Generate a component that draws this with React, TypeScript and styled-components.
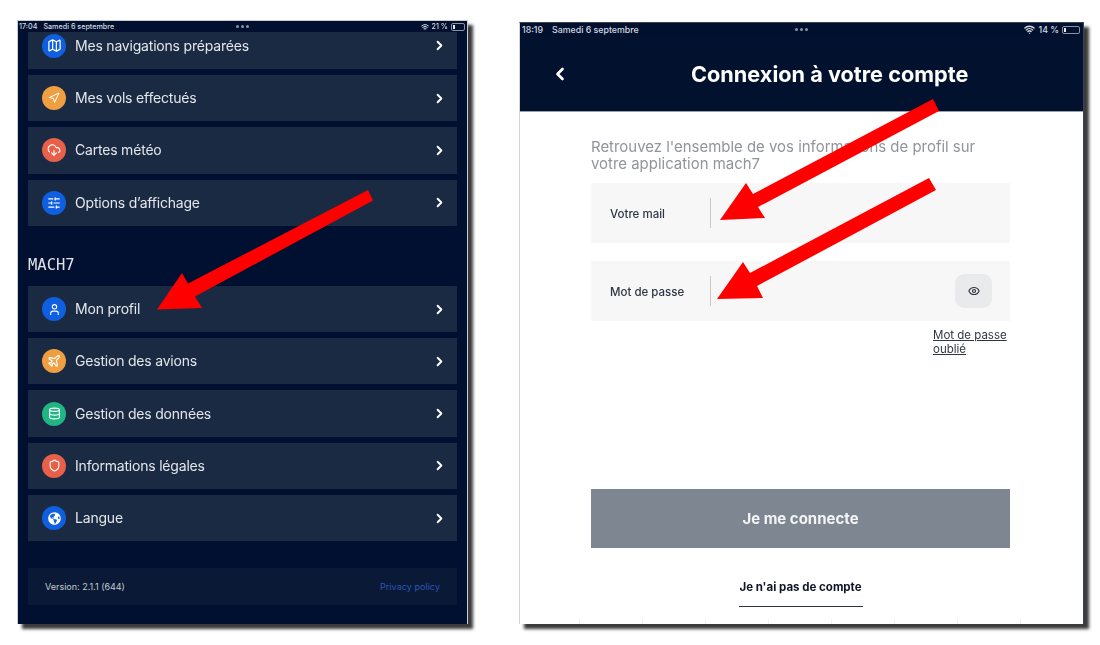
import React from 'react';
import styled, { createGlobalStyle } from 'styled-components';
import {
  ChevronLeft,
  ChevronRight,
  CloudDownload,
  Database,
  Eye,
  Map as MapIcon,
  Navigation,
  Plane,
  Shield,
  SlidersHorizontal,
  User,
  Wifi,
} from 'lucide-react';
import { FaGlobeAmericas } from 'react-icons/fa';

const GlobalStyle = createGlobalStyle`
  html, body {
    margin: 0;
    padding: 0;
    background: #fff;
  }
  * {
    box-sizing: border-box;
  }
`;

const Page = styled.div`
  position: relative;
  width: 1100px;
  height: 645px;
  overflow: hidden;
  display: flex;
  align-items: flex-start;
  padding: 20px 0 0 17px;
  gap: 51px;
  background: #fff;
  font-family: Inter, "Liberation Sans", sans-serif;
`;

const Tablet = styled.div<{ $width: number; $height: number; $drop: number }>`
  width: ${(p) => p.$width}px;
  height: ${(p) => p.$height}px;
  margin-top: ${(p) => p.$drop}px;
  display: flex;
  flex-direction: column;
  overflow: hidden;
  border: 1px solid #c9ccd2;
  border-bottom: none;
  box-shadow: 5px 5px 3px #3a3a3a;
  filter: blur(0.4px);
`;

const DarkTablet = styled(Tablet)`
  background: #011030;
`;

const LightTablet = styled(Tablet)`
  background: #fff;
  border-color: #3b4452;
  border-left-color: #d5d5d5;
`;

const StatusBar = styled.div<{ $size: number; $height: number; $pad: number; $gap: number; $start: number }>`
  height: ${(p) => p.$height}px;
  flex: none;
  display: grid;
  grid-template-columns: 1fr auto 1fr;
  align-items: center;
  padding: 0 ${(p) => p.$pad}px 0 ${(p) => p.$start}px;
  background: #01102e;
  color: #d5d9e0;
  font-size: ${(p) => p.$size}px;
  font-weight: 500;

  > div:first-child {
    gap: ${(p) => p.$gap}px;
  }
`;

const StatusLeft = styled.div`
  display: flex;
`;

const StatusDots = styled.div`
  display: flex;
  gap: 2px;

  i {
    width: 3px;
    height: 3px;
    border-radius: 50%;
    background: #8b93a3;
  }
`;

const StatusRight = styled.div`
  display: flex;
  align-items: center;
  justify-content: flex-end;
  gap: 3px;
`;

const Battery = styled.div<{ $width: number; $level: number }>`
  position: relative;
  width: ${(p) => p.$width}px;
  height: 8px;
  border: 1px solid #8b93a3;
  border-radius: 2px;
  padding: 1px;

  &::before {
    content: '';
    display: block;
    height: 100%;
    width: ${(p) => p.$level}%;
    background: #e8eaee;
  }
`;

const MenuArea = styled.div`
  display: flex;
  flex-direction: column;
  padding: 0 10px;
`;

const MenuGroup = styled.div`
  display: flex;
  flex-direction: column;
  gap: 6px;
`;

const MenuRow = styled.div<{ $cut?: boolean }>`
  height: ${(p) => (p.$cut ? 37 : 46.3)}px;
  display: flex;
  align-items: center;
  padding: 0 10px ${(p) => (p.$cut ? 10 : 0)}px 14px;
  background: #1b2a43;
  color: #e3e6ea;
  font-size: 14px;
  letter-spacing: -0.2px;
`;

const IconDisc = styled.span<{ $color: string }>`
  width: 24px;
  height: 24px;
  flex: none;
  display: flex;
  align-items: center;
  justify-content: center;
  border-radius: 50%;
  margin-right: 9px;
  background: ${(p) => p.$color};
  color: #fff;
`;

const RowLabel = styled.span`
  flex: 1;
  padding-bottom: 1px;
`;

const SectionLabel = styled.div`
  height: 60px;
  padding-top: 29px;
  color: #dfe2e6;
  font-family: "DejaVu Sans Mono", "Liberation Mono", monospace;
  font-size: 15.5px;
  line-height: 20px;
`;

const FooterBar = styled.div`
  height: 37px;
  margin-top: 27px;
  display: flex;
  align-items: center;
  justify-content: space-between;
  padding: 0 17px 0 17px;
  background: #0a1a36;
  color: #c5cad2;
  font-size: 9px;
`;

const PrivacyLink = styled.span`
  color: #2a55b8;
  font-size: 9.1px;
`;

const Hero = styled.div`
  height: 76px;
  flex: none;
  display: flex;
  align-items: center;
  padding: 0 0 0 30px;
  background: #01112e;
  color: #fff;
  border-bottom: 1px solid #98a0ac;
`;

const HeroTitle = styled.h1`
  margin: 0 0 0 121px;
  font-size: 21.7px;
  font-weight: 700;
`;

const FormArea = styled.div`
  flex: 1;
  display: flex;
  flex-direction: column;
  padding: 27px 73px 0 71px;
`;

const Intro = styled.p`
  margin: 0 0 10px;
  color: #90959d;
  font-size: 14.95px;
  line-height: 17px;
`;

const Field = styled.div`
  height: 60px;
  flex: none;
  display: flex;
  align-items: center;
  padding: 0 18px 0 19px;
  margin-bottom: 18px;
  background: #f7f7f7;
`;

const FieldLabel = styled.span`
  width: 100px;
  flex: none;
  padding-top: 2px;
  color: #2d3645;
  font-size: 11.5px;
  font-weight: 500;
`;

const Caret = styled.span`
  width: 1px;
  height: 30px;
  flex: none;
  background: #c6c8cc;
`;

const EyeButton = styled.span`
  width: 37px;
  height: 34px;
  margin-left: auto;
  display: flex;
  align-items: center;
  justify-content: center;
  border-radius: 9px;
  background: #e9eaec;
  color: #2f3744;
`;

const ForgotLink = styled.span`
  align-self: flex-end;
  width: 77px;
  margin-top: -11px;
  color: #2f3744;
  font-size: 11.5px;
  line-height: 14px;
  text-decoration: underline;
`;

const SubmitButton = styled.div`
  height: 59px;
  flex: none;
  margin-top: auto;
  display: flex;
  align-items: center;
  justify-content: center;
  background: #7e8691;
  color: #f4f5f6;
  font-size: 15px;
  font-weight: 700;
`;

const SignupRow = styled.div`
  display: flex;
  justify-content: center;
  margin-top: 31px;
  margin-bottom: 12px;
`;

const SignupLink = styled.span`
  width: 124px;
  padding-bottom: 10px;
  border-bottom: 1px solid #2c3442;
  color: #0d1524;
  font-size: 11.5px;
  font-weight: 700;
  line-height: 17px;
  text-align: center;
`;

const TickStrip = styled.div`
  height: 5px;
  flex: none;
  background-image: repeating-linear-gradient(90deg, #efefef 0 1px, transparent 1px 63px);
  background-position-x: 59px;
  background-repeat: no-repeat;
`;

const Overlay = styled.svg`
  position: absolute;
  left: 0;
  top: 0;
  pointer-events: none;
`;

type MenuItem = {
  label: string;
  color: string;
  icon: React.ReactNode;
  cut?: boolean;
};

const BLUE = '#0f5fe0';
const ORANGE = '#ef9f42';
const RED = '#e9604a';
const GREEN = '#1fb683';

const topItems: MenuItem[] = [
  { label: 'Mes navigations préparées', color: BLUE, icon: <MapIcon size={15} />, cut: true },
  { label: 'Mes vols effectués', color: ORANGE, icon: <Navigation size={12} /> },
  { label: 'Cartes météo', color: RED, icon: <CloudDownload size={14} /> },
  { label: 'Options d’affichage', color: BLUE, icon: <SlidersHorizontal size={14} /> },
];

const appItems: MenuItem[] = [
  { label: 'Mon profil', color: BLUE, icon: <User size={13} /> },
  { label: 'Gestion des avions', color: ORANGE, icon: <Plane size={14} /> },
  { label: 'Gestion des données', color: GREEN, icon: <Database size={13} /> },
  { label: 'Informations légales', color: RED, icon: <Shield size={13} /> },
  { label: 'Langue', color: BLUE, icon: <FaGlobeAmericas size={13} /> },
];

const arrows = [
  '157,309.5 182,273 188,283.5 368,190 373,200.5 195,296.5 202,308',
  '720,220 746,183 753,194 933,99 939,111 758,207 765,218',
  '717,299 743,262 750,273 929,178 936,190 757,286 763,298',
];

function Menu({ items }: { items: MenuItem[] }) {
  return (
    <MenuGroup>
      {items.map((item) => (
        <MenuRow key={item.label} $cut={item.cut}>
          <IconDisc $color={item.color}>{item.icon}</IconDisc>
          <RowLabel>{item.label}</RowLabel>
          <ChevronRight size={15} strokeWidth={3} color="#fff" />
        </MenuRow>
      ))}
    </MenuGroup>
  );
}

export default function App() {
  return (
    <Page>
      <GlobalStyle />

      <DarkTablet $width={451} $height={604} $drop={0}>
        <StatusBar $size={7.2} $height={11} $pad={2} $gap={6} $start={1}>
          <StatusLeft>
            <span>17:04</span>
            <span>Samedi 6 septembre</span>
          </StatusLeft>
          <StatusDots><i /><i /><i /></StatusDots>
          <StatusRight>
            <Wifi size={8} strokeWidth={3} />
            <span>21 %</span>
            <Battery $width={14} $level={20} />
          </StatusRight>
        </StatusBar>
        <MenuArea>
          <Menu items={topItems} />
          <SectionLabel>MACH7</SectionLabel>
          <Menu items={appItems} />
          <FooterBar>
            <span>Version: 2.1.1 (644)</span>
            <PrivacyLink>Privacy policy</PrivacyLink>
          </FooterBar>
        </MenuArea>
      </DarkTablet>

      <LightTablet $width={565} $height={602} $drop={2}>
        <StatusBar $size={8.8} $height={13} $pad={3} $gap={9} $start={2}>
          <StatusLeft>
            <span>18:19</span>
            <span>Samedi 6 septembre</span>
          </StatusLeft>
          <StatusDots><i /><i /><i /></StatusDots>
          <StatusRight>
            <Wifi size={11} strokeWidth={3} />
            <span>14 %</span>
            <Battery $width={18} $level={12} />
          </StatusRight>
        </StatusBar>
        <Hero>
          <ChevronLeft size={20} strokeWidth={3.2} />
          <HeroTitle>Connexion à votre compte</HeroTitle>
        </Hero>
        <FormArea>
          <Intro>
            Retrouvez l'ensemble de vos informations de profil sur<br />
            votre application mach7
          </Intro>
          <Field>
            <FieldLabel>Votre mail</FieldLabel>
            <Caret />
          </Field>
          <Field>
            <FieldLabel>Mot de passe</FieldLabel>
            <Caret />
            <EyeButton><Eye size={12} strokeWidth={2.4} /></EyeButton>
          </Field>
          <ForgotLink>Mot de passe oublié</ForgotLink>
          <SubmitButton>Je me connecte</SubmitButton>
          <SignupRow>
            <SignupLink>Je n'ai pas de compte</SignupLink>
          </SignupRow>
        </FormArea>
        <TickStrip />
      </LightTablet>

      <Overlay width={1100} height={645} viewBox="0 0 1100 645">
        {arrows.map((points) => (
          <polygon key={points} points={points} fill="#fe0000" />
        ))}
      </Overlay>
    </Page>
  );
}
